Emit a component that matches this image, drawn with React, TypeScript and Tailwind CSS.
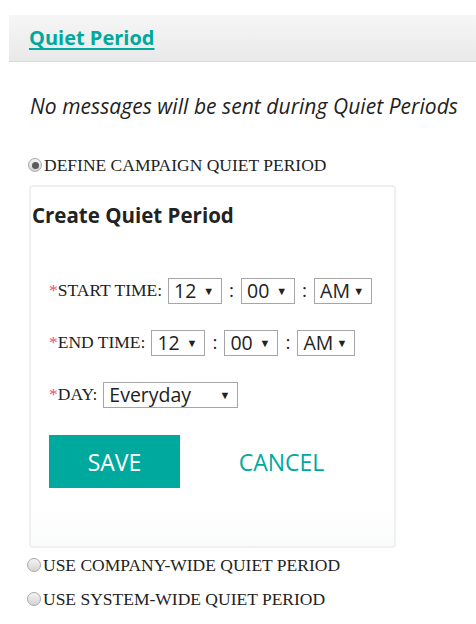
import React from "react";

const teal = "text-[#00a99d]";
const serif = "font-['Liberation_Serif',serif] text-[17.5px] text-[#222]";

function Radio({ checked }: { checked?: boolean }) {
  return (
    <span className="relative inline-flex w-[14px] h-[14px] rounded-full border border-[#a9a9a9] bg-gradient-to-b from-[#f4f4f4] to-[#d4d4d4] items-center justify-center shrink-0">
      {checked && <span className="w-[7px] h-[7px] rounded-full bg-[#5a5a5a]" />}
    </span>
  );
}

function Select({ value, width }: { value: string; width: string }) {
  return (
    <div
      className={`${width} h-[26px] border border-[#a6a6a6] bg-white flex items-center justify-between pl-[5px] pr-[7px] text-[19.5px] text-[#222] leading-none`}
    >
      <span>{value}</span>
      <span className="text-[11px] text-[#222]">▼</span>
    </div>
  );
}

function TimeRow({ label }: { label: string }) {
  return (
    <div className="flex items-center h-[26px]">
      <span className={`${serif} mr-[6px]`}>
        <span className="text-[#f0506e]">*</span>
        {label}
      </span>
      <Select value="12" width="w-[54px]" />
      <span className="w-[19px] text-center text-[19px] text-[#222]">:</span>
      <Select value="00" width="w-[54px]" />
      <span className="w-[19px] text-center text-[19px] text-[#222]">:</span>
      <Select value="AM" width="w-[58px]" />
    </div>
  );
}

export default function App() {
  return (
    <div className="w-[476px] h-[624px] bg-white font-['Open_Sans',sans-serif] overflow-hidden">
      {/* header band */}
      <div className="ml-[9px] mt-[15px] h-[47px] bg-gradient-to-b from-[#f6f6f6] to-[#e9e9e9] border-b border-[#d9d9d9] flex items-center pl-[20px]">
        <a className={`${teal} font-bold text-[20px] underline underline-offset-[3px] decoration-2`}>
          Quiet Period
        </a>
      </div>

      <p className="mt-[34px] ml-[30px] italic text-[21px] tracking-[0.05px] text-[#222] leading-none">
        No messages will be sent during Quiet Periods
      </p>

      <div className="mt-[39px] ml-[28px] flex items-center gap-[2px] h-[18px]">
        <Radio checked />
        <span className={serif}>DEFINE CAMPAIGN QUIET PERIOD</span>
      </div>

      {/* card */}
      <div className="mt-[11px] ml-[29px] w-[367px] h-[363px] border-2 border-[#f0f0f0] rounded-[4px] flex flex-col bg-gradient-to-b from-white from-90% to-[#fafbfb]">
        <h2 className="ml-[1px] mt-[18px] font-bold text-[20.5px] text-[#222] leading-none">Create Quiet Period</h2>

        <div className="ml-[18px] mt-[52px] flex flex-col gap-[26px]">
          <TimeRow label="START TIME:" />
          <TimeRow label="END TIME:" />
          <div className="flex items-center h-[26px]">
            <span className={`${serif} mr-[6px]`}>
              <span className="text-[#f0506e]">*</span>DAY:
            </span>
            <Select value="Everyday" width="w-[135px]" />
          </div>
        </div>

        <div className="ml-[18px] mt-[27px] flex items-center">
          <button className="w-[131px] h-[53px] bg-[#00a99d] text-white text-[23px] pt-[2px]">SAVE</button>
          <button className={`ml-[36px] w-[131px] h-[53px] ${teal} text-[23px] pt-[2px]`}>CANCEL</button>
        </div>
      </div>

      <div className="mt-[8px] ml-[27px] flex items-center gap-[2px] h-[18px]">
        <Radio />
        <span className={serif}>USE COMPANY-WIDE QUIET PERIOD</span>
      </div>
      <div className="mt-[16px] ml-[27px] flex items-center gap-[2px] h-[18px]">
        <Radio />
        <span className={serif}>USE SYSTEM-WIDE QUIET PERIOD</span>
      </div>
    </div>
  );
}
